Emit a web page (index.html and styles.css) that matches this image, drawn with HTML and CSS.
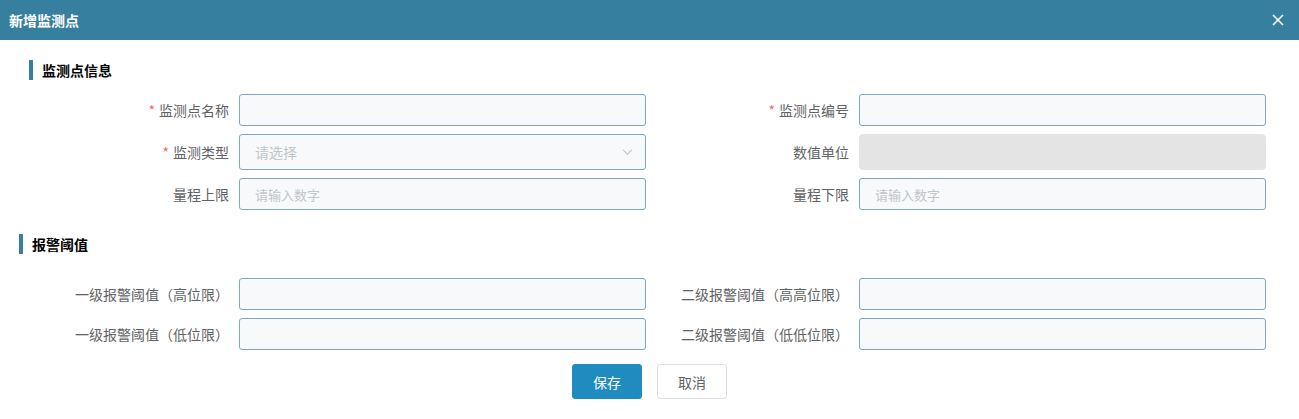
FILE: index.html
```html
<!DOCTYPE html>
<html lang="zh-CN">
<head>
    <meta charset="UTF-8">
    <meta name="viewport" content="width=device-width, initial-scale=1.0">
    <title>新增监测点</title>
    <link rel="stylesheet" href="styles.css">
</head>
<body>
    <div class="dialog">
        <div class="dialog-header">
            <span class="dialog-title">新增监测点</span>
            <button class="btn-close" aria-label="关闭">
                <svg viewBox="0 0 12 12" width="12" height="12">
                    <path d="M1 1L11 11M11 1L1 11" stroke="#ffffff" stroke-width="1.6" fill="none"/>
                </svg>
            </button>
        </div>

        <div class="section-title first">监测点信息</div>
        <div class="form-grid">
            <label class="form-label required">监测点名称</label>
            <input class="form-input" type="text">
            <label class="form-label required">监测点编号</label>
            <input class="form-input" type="text">

            <label class="form-label required">监测类型</label>
            <div class="form-select tall">
                <span class="select-placeholder">请选择</span>
                <svg class="select-arrow" viewBox="0 0 12 7" width="11" height="6">
                    <path d="M1 1L6 6L11 1" stroke="#c0c4cc" stroke-width="1.3" fill="none"/>
                </svg>
            </div>
            <label class="form-label">数值单位</label>
            <div class="form-disabled tall"></div>

            <label class="form-label">量程上限</label>
            <input class="form-input" type="text" placeholder="请输入数字">
            <label class="form-label">量程下限</label>
            <input class="form-input" type="text" placeholder="请输入数字">
        </div>

        <div class="section-title second">报警阈值</div>
        <div class="form-grid">
            <label class="form-label">一级报警阈值（高位限）</label>
            <input class="form-input" type="text">
            <label class="form-label">二级报警阈值（高高位限）</label>
            <input class="form-input" type="text">

            <label class="form-label">一级报警阈值（低位限）</label>
            <input class="form-input" type="text">
            <label class="form-label">二级报警阈值（低低位限）</label>
            <input class="form-input" type="text">
        </div>

        <div class="dialog-footer">
            <button class="btn btn-save">保存</button>
            <button class="btn btn-cancel">取消</button>
        </div>
    </div>
</body>
</html>
```

FILE: styles.css
```css
body {
    margin: 0;
    padding: 0;
    background-color: #ffffff;
    font-family: "Noto Sans CJK SC", "Liberation Sans", sans-serif;
    font-size: 14px;
}
.dialog {
    width: 1299px;
}
.dialog-header {
    height: 40px;
    background-color: #367f9f;
    display: flex;
    align-items: center;
    justify-content: space-between;
    padding: 0 15px 0 9px;
}
.dialog-title {
    color: #ffffff;
    font-size: 14px;
    font-weight: bold;
}
.btn-close {
    background: none;
    border: none;
    padding: 0;
    width: 12px;
    height: 12px;
    display: flex;
    cursor: pointer;
}
.section-title {
    height: 20px;
    line-height: 20px;
    font-size: 14px;
    font-weight: bold;
    color: #000000;
    border-left: 4px solid #367f9f;
    padding-left: 9px;
}
.section-title.first {
    margin: 20px 0 14px 29px;
}
.section-title.second {
    margin: 24px 0 24px 19px;
}
.form-grid {
    display: grid;
    grid-template-columns: 229px 407px 193px 407px;
    column-gap: 10px;
    row-gap: 8px;
    align-items: center;
}
.form-label {
    text-align: right;
    color: #606266;
    font-size: 14px;
    white-space: nowrap;
}
.form-label.required::before {
    content: "*";
    color: #f56c6c;
    margin-right: 4px;
}
.form-input,
.form-select,
.form-disabled {
    box-sizing: border-box;
    height: 32px;
    width: 407px;
    border: 1px solid #7ea7c9;
    border-radius: 3px;
    background-color: #f8f9fb;
    padding: 0 15px;
    font-family: inherit;
    font-size: 13px;
    color: #606266;
    outline: none;
}
.form-input::placeholder {
    color: #c0c4cc;
}
.tall {
    height: 36px;
}
.form-select {
    display: flex;
    align-items: center;
    justify-content: space-between;
    padding-right: 12px;
}
.select-placeholder {
    color: #c0c4cc;
    font-size: 14px;
}
.form-disabled {
    border-color: #e4e4e4;
    background-color: #e4e4e4;
    border-radius: 4px;
}
.dialog-footer {
    display: flex;
    justify-content: center;
    gap: 15px;
    margin-top: 14px;
}
.btn {
    height: 35px;
    width: 70px;
    border-radius: 3px;
    font-family: inherit;
    font-size: 14px;
    cursor: pointer;
}
.btn-save {
    background-color: #1f8bbf;
    border: 1px solid #1f8bbf;
    color: #ffffff;
}
.btn-cancel {
    background-color: #ffffff;
    border: 1px solid #dcdfe6;
    color: #606266;
}
```
